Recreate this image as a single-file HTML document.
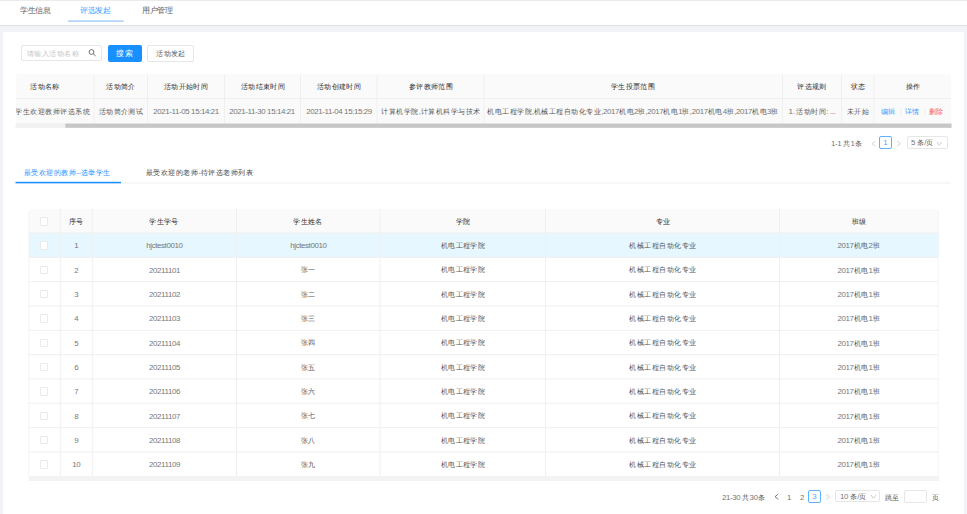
<!DOCTYPE html>
<html><head><meta charset="utf-8"><style>
html,body{margin:0;padding:0;}
body{width:967px;height:514px;overflow:hidden;position:relative;background:#f0f2f5;font-family:"Liberation Sans", sans-serif;font-size:8px;}
body>div{position:absolute;white-space:nowrap;}
.t{display:flex;align-items:center;}
.t span{display:inline-block;line-height:10px;}
b{font-weight:normal;font-size:8.45px;letter-spacing:-0.4px;opacity:.8;}
</style></head><body>
<div style="left:0px;top:0px;width:967px;height:25px;background:#fff;"></div>
<div style="left:0px;top:0px;width:967px;height:1.2px;background:#ebebeb;"></div>
<div style="left:0px;top:25px;width:967px;height:1px;background:#e0e0e0;"></div>
<div class="t" style="left:20px;top:3.30px;width:40px;height:15px;justify-content:flex-start;color:#5a5a5a;"><span style="transform:scale(0.95);transform-origin:left center">学生信息</span></div>
<div class="t" style="left:80px;top:3.30px;width:40px;height:15px;justify-content:flex-start;color:#3a9bff;"><span style="transform:scale(0.95);transform-origin:left center">评选发起</span></div>
<div class="t" style="left:141.5px;top:3.30px;width:40px;height:15px;justify-content:flex-start;color:#5a5a5a;"><span style="transform:scale(0.95);transform-origin:left center">用户管理</span></div>
<div style="left:3px;top:32px;width:961px;height:490px;background:#fff;"></div>
<div style="left:21.1px;top:44.5px;width:81.3px;height:16.8px;border:1px solid #e6e6e6;border-radius:2px;box-sizing:border-box;background:#fff;"></div>
<div class="t" style="left:27px;top:45.30px;width:60px;height:16.8px;justify-content:flex-start;color:#c4c4c4;"><span style="transform:scale(0.935);transform-origin:left center">请输入活动名称</span></div>
<svg style="position:absolute;left:86px;top:47px;" width="12" height="12" viewBox="0 0 12 12"><circle cx="5.5" cy="5" r="2.4" fill="none" stroke="#606060" stroke-width="0.9"/><line x1="7.3" y1="6.9" x2="9.6" y2="8.9" stroke="#606060" stroke-width="0.9"/></svg>
<div style="left:108px;top:44.5px;width:34px;height:17.1px;background:#1890ff;border-radius:2px;"></div>
<div class="t" style="left:107.5px;top:44.70px;width:34px;height:17.1px;justify-content:center;color:#fff;"><span style="transform:scale(1.0);transform-origin:center">搜<b>&nbsp;</b>索</span></div>
<div style="left:147.2px;top:44.5px;width:46.7px;height:17.1px;border:1px solid #e6e6e6;border-radius:2px;box-sizing:border-box;"></div>
<div class="t" style="left:147.2px;top:45.30px;width:46.7px;height:17.1px;justify-content:center;color:#555;"><span style="transform:scale(0.935);transform-origin:center">活动发起</span></div>
<div style="left:15.5px;top:74.3px;width:935.5px;height:48.7px;background:#fafafa;border-radius:3px 3px 0 0;"></div>
<div class="t" style="left:-4.5px;top:75.10px;width:98.5px;height:24.2px;justify-content:center;color:#2a2a2a;"><span style="transform:scale(0.935);transform-origin:center">活动名称</span></div>
<div class="t" style="left:94px;top:75.10px;width:53.5px;height:24.2px;justify-content:center;color:#2a2a2a;"><span style="transform:scale(0.935);transform-origin:center">活动简介</span></div>
<div class="t" style="left:147.5px;top:75.10px;width:77.0px;height:24.2px;justify-content:center;color:#2a2a2a;"><span style="transform:scale(0.935);transform-origin:center">活动开始时间</span></div>
<div class="t" style="left:224.5px;top:75.10px;width:76.0px;height:24.2px;justify-content:center;color:#2a2a2a;"><span style="transform:scale(0.935);transform-origin:center">活动结束时间</span></div>
<div class="t" style="left:300.5px;top:75.10px;width:76.5px;height:24.2px;justify-content:center;color:#2a2a2a;"><span style="transform:scale(0.935);transform-origin:center">活动创建时间</span></div>
<div class="t" style="left:377px;top:75.10px;width:107px;height:24.2px;justify-content:center;color:#2a2a2a;"><span style="transform:scale(0.935);transform-origin:center">参评教师范围</span></div>
<div class="t" style="left:484px;top:75.10px;width:298.5px;height:24.2px;justify-content:center;color:#2a2a2a;"><span style="transform:scale(0.935);transform-origin:center">学生投票范围</span></div>
<div class="t" style="left:782.5px;top:75.10px;width:59.0px;height:24.2px;justify-content:center;color:#2a2a2a;"><span style="transform:scale(0.935);transform-origin:center">评选规则</span></div>
<div class="t" style="left:841.5px;top:75.10px;width:32.5px;height:24.2px;justify-content:center;color:#2a2a2a;"><span style="transform:scale(0.935);transform-origin:center">状态</span></div>
<div class="t" style="left:874px;top:75.10px;width:77px;height:24.2px;justify-content:center;color:#2a2a2a;"><span style="transform:scale(0.935);transform-origin:center">操作</span></div>
<div class="t" style="left:15.5px;top:99.30px;width:74px;height:24.5px;justify-content:flex-end;color:#555;overflow:hidden;"><span style="transform:scale(0.935);transform-origin:right center">学生欢迎教师评选系统</span></div>
<div class="t" style="left:94px;top:99.30px;width:53.5px;height:24.5px;justify-content:center;color:#555;"><span style="transform:scale(0.935);transform-origin:center">活动简介测试</span></div>
<div class="t" style="left:147.5px;top:99.30px;width:77.0px;height:24.5px;justify-content:center;color:#555;"><span style="transform:scale(0.935);transform-origin:center"><b>2021-11-05 15:14:21</b></span></div>
<div class="t" style="left:224.5px;top:99.30px;width:76.0px;height:24.5px;justify-content:center;color:#555;"><span style="transform:scale(0.935);transform-origin:center"><b>2021-11-30 15:14:21</b></span></div>
<div class="t" style="left:300.5px;top:99.30px;width:76.5px;height:24.5px;justify-content:center;color:#555;"><span style="transform:scale(0.935);transform-origin:center"><b>2021-11-04 15:15:29</b></span></div>
<div class="t" style="left:377px;top:99.30px;width:107px;height:24.5px;justify-content:center;color:#555;"><span style="transform:scale(0.935);transform-origin:center">计算机学院<b>,</b>计算机科学与技术</span></div>
<div class="t" style="left:484px;top:99.30px;width:298.5px;height:24.5px;justify-content:center;color:#555;"><span style="transform:scale(0.935);transform-origin:center">机电工程学院<b>,</b>机械工程自动化专业<b>,2017</b>机电<b>2</b>班<b>,2017</b>机电<b>1</b>班<b>,2017</b>机电<b>4</b>班<b>,2017</b>机电<b>3</b>班</span></div>
<div class="t" style="left:782.5px;top:99.30px;width:59.0px;height:24.5px;justify-content:center;color:#555;"><span style="transform:scale(0.935);transform-origin:center"><b>1. </b>活动时间<b>: ...</b></span></div>
<div class="t" style="left:841.5px;top:99.30px;width:32.5px;height:24.5px;justify-content:center;color:#555;"><span style="transform:scale(0.935);transform-origin:center">未开始</span></div>
<div class="t" style="left:881px;top:99.30px;width:20px;height:24.5px;justify-content:flex-start;color:#3a9bff;"><span style="transform:scale(0.935);transform-origin:left center">编辑</span></div>
<div class="t" style="left:905px;top:99.30px;width:20px;height:24.5px;justify-content:flex-start;color:#3a9bff;"><span style="transform:scale(0.935);transform-origin:left center">详情</span></div>
<div class="t" style="left:929px;top:99.30px;width:20px;height:24.5px;justify-content:flex-start;color:#ff4d4f;"><span style="transform:scale(0.935);transform-origin:left center">删除</span></div>
<div class="t" style="left:831px;top:135.00px;width:40px;height:16px;justify-content:flex-start;color:#555;"><span style="transform:scale(0.935);transform-origin:left center"><b>1-1 </b>共<b>1</b>条</span></div>
<svg style="position:absolute;left:869.5px;top:138.5px;" width="7.2999999999999545" height="9.300000000000011" viewBox="0 0 7.2999999999999545 9.300000000000011"><polyline points="5.2999999999999545,2 2,4.650000000000006 5.2999999999999545,7.300000000000011" fill="none" stroke="#c8c8c8" stroke-width="0.8"/></svg>
<div style="left:879.3px;top:136.4px;width:12.6px;height:12.6px;border:1px solid #5fb0ff;border-radius:2px;box-sizing:border-box;"></div>
<div class="t" style="left:879.3px;top:136.60px;width:12.6px;height:12.6px;justify-content:center;color:#1890ff;"><span style="transform:scale(0.935);transform-origin:center"><b>1</b></span></div>
<svg style="position:absolute;left:895px;top:138.5px;" width="7.2999999999999545" height="9.300000000000011" viewBox="0 0 7.2999999999999545 9.300000000000011"><polyline points="2,2 5.2999999999999545,4.650000000000006 2,7.300000000000011" fill="none" stroke="#c8c8c8" stroke-width="0.8"/></svg>
<div style="left:906.5px;top:136.4px;width:41px;height:12.7px;border:1px solid #e6e6e6;border-radius:2px;box-sizing:border-box;"></div>
<div class="t" style="left:910.5px;top:136.60px;width:30px;height:12.7px;justify-content:flex-start;color:#555;"><span style="transform:scale(0.935);transform-origin:left center"><b>5 </b>条<b>/</b>页</span></div>
<svg style="position:absolute;left:935.4px;top:139.5px;" width="8.600000000000023" height="7.300000000000011" viewBox="0 0 8.600000000000023 7.300000000000011"><polyline points="2,2 4.300000000000011,5.300000000000011 6.600000000000023,2" fill="none" stroke="#c0c0c0" stroke-width="0.8"/></svg>
<div class="t" style="left:24px;top:164.60px;width:120px;height:16px;justify-content:flex-start;color:#1890ff;"><span style="transform:scale(0.935);transform-origin:left center">最受欢迎的教师<b>--</b>选举学生</span></div>
<div class="t" style="left:146.3px;top:164.60px;width:140px;height:16px;justify-content:flex-start;color:#444;"><span style="transform:scale(0.935);transform-origin:left center">最受欢迎的老师<b>-</b>待评选老师列表</span></div>
<div style="left:28.5px;top:208.7px;width:910.0px;height:24.3px;background:#fafafa;border-radius:3px 3px 0 0;"></div>
<div style="left:28.5px;top:233.0px;width:910.0px;height:24.33px;background:#e6f7ff;"></div>
<div class="t" style="left:60.3px;top:209.50px;width:32.0px;height:24.3px;justify-content:center;color:#2a2a2a;"><span style="transform:scale(0.935);transform-origin:center">序号</span></div>
<div class="t" style="left:92.3px;top:209.50px;width:144.2px;height:24.3px;justify-content:center;color:#2a2a2a;"><span style="transform:scale(0.935);transform-origin:center">学生学号</span></div>
<div class="t" style="left:236.5px;top:209.50px;width:143.5px;height:24.3px;justify-content:center;color:#2a2a2a;"><span style="transform:scale(0.935);transform-origin:center">学生姓名</span></div>
<div class="t" style="left:380px;top:209.50px;width:165.5px;height:24.3px;justify-content:center;color:#2a2a2a;"><span style="transform:scale(0.935);transform-origin:center">学院</span></div>
<div class="t" style="left:545.5px;top:209.50px;width:234.0px;height:24.3px;justify-content:center;color:#2a2a2a;"><span style="transform:scale(0.935);transform-origin:center">专业</span></div>
<div class="t" style="left:779.5px;top:209.50px;width:159.0px;height:24.3px;justify-content:center;color:#2a2a2a;"><span style="transform:scale(0.935);transform-origin:center">班级</span></div>
<div style="left:40.2px;top:217.4px;width:8.3px;height:8.3px;border:1px solid #ebebeb;border-radius:1px;box-sizing:border-box;background:#fff;"></div>
<div style="left:40.2px;top:241.4px;width:8.3px;height:8.3px;border:1px solid #ebebeb;border-radius:1px;box-sizing:border-box;background:#fff;"></div>
<div class="t" style="left:60.3px;top:233.80px;width:32.0px;height:24.33px;justify-content:center;color:#555;"><span style="transform:scale(0.935);transform-origin:center"><b>1</b></span></div>
<div class="t" style="left:92.3px;top:233.80px;width:144.2px;height:24.33px;justify-content:center;color:#555;"><span style="transform:scale(0.935);transform-origin:center"><b>hjctest0010</b></span></div>
<div class="t" style="left:236.5px;top:233.80px;width:143.5px;height:24.33px;justify-content:center;color:#555;"><span style="transform:scale(0.935);transform-origin:center"><b>hjctest0010</b></span></div>
<div class="t" style="left:380px;top:233.80px;width:165.5px;height:24.33px;justify-content:center;color:#555;"><span style="transform:scale(0.935);transform-origin:center">机电工程学院</span></div>
<div class="t" style="left:545.5px;top:233.80px;width:234.0px;height:24.33px;justify-content:center;color:#555;"><span style="transform:scale(0.935);transform-origin:center">机械工程自动化专业</span></div>
<div class="t" style="left:779.5px;top:233.80px;width:159.0px;height:24.33px;justify-content:center;color:#555;"><span style="transform:scale(0.935);transform-origin:center"><b>2017</b>机电<b>2</b>班</span></div>
<div style="left:40.2px;top:265.72999999999996px;width:8.3px;height:8.3px;border:1px solid #ebebeb;border-radius:1px;box-sizing:border-box;background:#fff;"></div>
<div class="t" style="left:60.3px;top:258.13px;width:32.0px;height:24.33px;justify-content:center;color:#555;"><span style="transform:scale(0.935);transform-origin:center"><b>2</b></span></div>
<div class="t" style="left:92.3px;top:258.13px;width:144.2px;height:24.33px;justify-content:center;color:#555;"><span style="transform:scale(0.935);transform-origin:center"><b>20211101</b></span></div>
<div class="t" style="left:236.5px;top:258.13px;width:143.5px;height:24.33px;justify-content:center;color:#555;"><span style="transform:scale(0.935);transform-origin:center">张一</span></div>
<div class="t" style="left:380px;top:258.13px;width:165.5px;height:24.33px;justify-content:center;color:#555;"><span style="transform:scale(0.935);transform-origin:center">机电工程学院</span></div>
<div class="t" style="left:545.5px;top:258.13px;width:234.0px;height:24.33px;justify-content:center;color:#555;"><span style="transform:scale(0.935);transform-origin:center">机械工程自动化专业</span></div>
<div class="t" style="left:779.5px;top:258.13px;width:159.0px;height:24.33px;justify-content:center;color:#555;"><span style="transform:scale(0.935);transform-origin:center"><b>2017</b>机电<b>1</b>班</span></div>
<div style="left:40.2px;top:290.05999999999995px;width:8.3px;height:8.3px;border:1px solid #ebebeb;border-radius:1px;box-sizing:border-box;background:#fff;"></div>
<div class="t" style="left:60.3px;top:282.46px;width:32.0px;height:24.33px;justify-content:center;color:#555;"><span style="transform:scale(0.935);transform-origin:center"><b>3</b></span></div>
<div class="t" style="left:92.3px;top:282.46px;width:144.2px;height:24.33px;justify-content:center;color:#555;"><span style="transform:scale(0.935);transform-origin:center"><b>20211102</b></span></div>
<div class="t" style="left:236.5px;top:282.46px;width:143.5px;height:24.33px;justify-content:center;color:#555;"><span style="transform:scale(0.935);transform-origin:center">张二</span></div>
<div class="t" style="left:380px;top:282.46px;width:165.5px;height:24.33px;justify-content:center;color:#555;"><span style="transform:scale(0.935);transform-origin:center">机电工程学院</span></div>
<div class="t" style="left:545.5px;top:282.46px;width:234.0px;height:24.33px;justify-content:center;color:#555;"><span style="transform:scale(0.935);transform-origin:center">机械工程自动化专业</span></div>
<div class="t" style="left:779.5px;top:282.46px;width:159.0px;height:24.33px;justify-content:center;color:#555;"><span style="transform:scale(0.935);transform-origin:center"><b>2017</b>机电<b>1</b>班</span></div>
<div style="left:40.2px;top:314.39px;width:8.3px;height:8.3px;border:1px solid #ebebeb;border-radius:1px;box-sizing:border-box;background:#fff;"></div>
<div class="t" style="left:60.3px;top:306.79px;width:32.0px;height:24.33px;justify-content:center;color:#555;"><span style="transform:scale(0.935);transform-origin:center"><b>4</b></span></div>
<div class="t" style="left:92.3px;top:306.79px;width:144.2px;height:24.33px;justify-content:center;color:#555;"><span style="transform:scale(0.935);transform-origin:center"><b>20211103</b></span></div>
<div class="t" style="left:236.5px;top:306.79px;width:143.5px;height:24.33px;justify-content:center;color:#555;"><span style="transform:scale(0.935);transform-origin:center">张三</span></div>
<div class="t" style="left:380px;top:306.79px;width:165.5px;height:24.33px;justify-content:center;color:#555;"><span style="transform:scale(0.935);transform-origin:center">机电工程学院</span></div>
<div class="t" style="left:545.5px;top:306.79px;width:234.0px;height:24.33px;justify-content:center;color:#555;"><span style="transform:scale(0.935);transform-origin:center">机械工程自动化专业</span></div>
<div class="t" style="left:779.5px;top:306.79px;width:159.0px;height:24.33px;justify-content:center;color:#555;"><span style="transform:scale(0.935);transform-origin:center"><b>2017</b>机电<b>1</b>班</span></div>
<div style="left:40.2px;top:338.71999999999997px;width:8.3px;height:8.3px;border:1px solid #ebebeb;border-radius:1px;box-sizing:border-box;background:#fff;"></div>
<div class="t" style="left:60.3px;top:331.12px;width:32.0px;height:24.33px;justify-content:center;color:#555;"><span style="transform:scale(0.935);transform-origin:center"><b>5</b></span></div>
<div class="t" style="left:92.3px;top:331.12px;width:144.2px;height:24.33px;justify-content:center;color:#555;"><span style="transform:scale(0.935);transform-origin:center"><b>20211104</b></span></div>
<div class="t" style="left:236.5px;top:331.12px;width:143.5px;height:24.33px;justify-content:center;color:#555;"><span style="transform:scale(0.935);transform-origin:center">张四</span></div>
<div class="t" style="left:380px;top:331.12px;width:165.5px;height:24.33px;justify-content:center;color:#555;"><span style="transform:scale(0.935);transform-origin:center">机电工程学院</span></div>
<div class="t" style="left:545.5px;top:331.12px;width:234.0px;height:24.33px;justify-content:center;color:#555;"><span style="transform:scale(0.935);transform-origin:center">机械工程自动化专业</span></div>
<div class="t" style="left:779.5px;top:331.12px;width:159.0px;height:24.33px;justify-content:center;color:#555;"><span style="transform:scale(0.935);transform-origin:center"><b>2017</b>机电<b>1</b>班</span></div>
<div style="left:40.2px;top:363.04999999999995px;width:8.3px;height:8.3px;border:1px solid #ebebeb;border-radius:1px;box-sizing:border-box;background:#fff;"></div>
<div class="t" style="left:60.3px;top:355.45px;width:32.0px;height:24.33px;justify-content:center;color:#555;"><span style="transform:scale(0.935);transform-origin:center"><b>6</b></span></div>
<div class="t" style="left:92.3px;top:355.45px;width:144.2px;height:24.33px;justify-content:center;color:#555;"><span style="transform:scale(0.935);transform-origin:center"><b>20211105</b></span></div>
<div class="t" style="left:236.5px;top:355.45px;width:143.5px;height:24.33px;justify-content:center;color:#555;"><span style="transform:scale(0.935);transform-origin:center">张五</span></div>
<div class="t" style="left:380px;top:355.45px;width:165.5px;height:24.33px;justify-content:center;color:#555;"><span style="transform:scale(0.935);transform-origin:center">机电工程学院</span></div>
<div class="t" style="left:545.5px;top:355.45px;width:234.0px;height:24.33px;justify-content:center;color:#555;"><span style="transform:scale(0.935);transform-origin:center">机械工程自动化专业</span></div>
<div class="t" style="left:779.5px;top:355.45px;width:159.0px;height:24.33px;justify-content:center;color:#555;"><span style="transform:scale(0.935);transform-origin:center"><b>2017</b>机电<b>1</b>班</span></div>
<div style="left:40.2px;top:387.38px;width:8.3px;height:8.3px;border:1px solid #ebebeb;border-radius:1px;box-sizing:border-box;background:#fff;"></div>
<div class="t" style="left:60.3px;top:379.78px;width:32.0px;height:24.33px;justify-content:center;color:#555;"><span style="transform:scale(0.935);transform-origin:center"><b>7</b></span></div>
<div class="t" style="left:92.3px;top:379.78px;width:144.2px;height:24.33px;justify-content:center;color:#555;"><span style="transform:scale(0.935);transform-origin:center"><b>20211106</b></span></div>
<div class="t" style="left:236.5px;top:379.78px;width:143.5px;height:24.33px;justify-content:center;color:#555;"><span style="transform:scale(0.935);transform-origin:center">张六</span></div>
<div class="t" style="left:380px;top:379.78px;width:165.5px;height:24.33px;justify-content:center;color:#555;"><span style="transform:scale(0.935);transform-origin:center">机电工程学院</span></div>
<div class="t" style="left:545.5px;top:379.78px;width:234.0px;height:24.33px;justify-content:center;color:#555;"><span style="transform:scale(0.935);transform-origin:center">机械工程自动化专业</span></div>
<div class="t" style="left:779.5px;top:379.78px;width:159.0px;height:24.33px;justify-content:center;color:#555;"><span style="transform:scale(0.935);transform-origin:center"><b>2017</b>机电<b>1</b>班</span></div>
<div style="left:40.2px;top:411.71px;width:8.3px;height:8.3px;border:1px solid #ebebeb;border-radius:1px;box-sizing:border-box;background:#fff;"></div>
<div class="t" style="left:60.3px;top:404.11px;width:32.0px;height:24.33px;justify-content:center;color:#555;"><span style="transform:scale(0.935);transform-origin:center"><b>8</b></span></div>
<div class="t" style="left:92.3px;top:404.11px;width:144.2px;height:24.33px;justify-content:center;color:#555;"><span style="transform:scale(0.935);transform-origin:center"><b>20211107</b></span></div>
<div class="t" style="left:236.5px;top:404.11px;width:143.5px;height:24.33px;justify-content:center;color:#555;"><span style="transform:scale(0.935);transform-origin:center">张七</span></div>
<div class="t" style="left:380px;top:404.11px;width:165.5px;height:24.33px;justify-content:center;color:#555;"><span style="transform:scale(0.935);transform-origin:center">机电工程学院</span></div>
<div class="t" style="left:545.5px;top:404.11px;width:234.0px;height:24.33px;justify-content:center;color:#555;"><span style="transform:scale(0.935);transform-origin:center">机械工程自动化专业</span></div>
<div class="t" style="left:779.5px;top:404.11px;width:159.0px;height:24.33px;justify-content:center;color:#555;"><span style="transform:scale(0.935);transform-origin:center"><b>2017</b>机电<b>1</b>班</span></div>
<div style="left:40.2px;top:436.03999999999996px;width:8.3px;height:8.3px;border:1px solid #ebebeb;border-radius:1px;box-sizing:border-box;background:#fff;"></div>
<div class="t" style="left:60.3px;top:428.44px;width:32.0px;height:24.33px;justify-content:center;color:#555;"><span style="transform:scale(0.935);transform-origin:center"><b>9</b></span></div>
<div class="t" style="left:92.3px;top:428.44px;width:144.2px;height:24.33px;justify-content:center;color:#555;"><span style="transform:scale(0.935);transform-origin:center"><b>20211108</b></span></div>
<div class="t" style="left:236.5px;top:428.44px;width:143.5px;height:24.33px;justify-content:center;color:#555;"><span style="transform:scale(0.935);transform-origin:center">张八</span></div>
<div class="t" style="left:380px;top:428.44px;width:165.5px;height:24.33px;justify-content:center;color:#555;"><span style="transform:scale(0.935);transform-origin:center">机电工程学院</span></div>
<div class="t" style="left:545.5px;top:428.44px;width:234.0px;height:24.33px;justify-content:center;color:#555;"><span style="transform:scale(0.935);transform-origin:center">机械工程自动化专业</span></div>
<div class="t" style="left:779.5px;top:428.44px;width:159.0px;height:24.33px;justify-content:center;color:#555;"><span style="transform:scale(0.935);transform-origin:center"><b>2017</b>机电<b>1</b>班</span></div>
<div style="left:40.2px;top:460.36999999999995px;width:8.3px;height:8.3px;border:1px solid #ebebeb;border-radius:1px;box-sizing:border-box;background:#fff;"></div>
<div class="t" style="left:60.3px;top:452.77px;width:32.0px;height:24.33px;justify-content:center;color:#555;"><span style="transform:scale(0.935);transform-origin:center"><b>10</b></span></div>
<div class="t" style="left:92.3px;top:452.77px;width:144.2px;height:24.33px;justify-content:center;color:#555;"><span style="transform:scale(0.935);transform-origin:center"><b>20211109</b></span></div>
<div class="t" style="left:236.5px;top:452.77px;width:143.5px;height:24.33px;justify-content:center;color:#555;"><span style="transform:scale(0.935);transform-origin:center">张九</span></div>
<div class="t" style="left:380px;top:452.77px;width:165.5px;height:24.33px;justify-content:center;color:#555;"><span style="transform:scale(0.935);transform-origin:center">机电工程学院</span></div>
<div class="t" style="left:545.5px;top:452.77px;width:234.0px;height:24.33px;justify-content:center;color:#555;"><span style="transform:scale(0.935);transform-origin:center">机械工程自动化专业</span></div>
<div class="t" style="left:779.5px;top:452.77px;width:159.0px;height:24.33px;justify-content:center;color:#555;"><span style="transform:scale(0.935);transform-origin:center"><b>2017</b>机电<b>1</b>班</span></div>
<div style="left:28.5px;top:476px;width:910px;height:4.7px;background:#f3f3f3;"></div>
<div class="t" style="left:721.6px;top:489.00px;width:50px;height:16px;justify-content:flex-start;color:#555;"><span style="transform:scale(0.935);transform-origin:left center"><b>21-30 </b>共<b>30</b>条</span></div>
<svg style="position:absolute;left:773px;top:491.8px;" width="7.2999999999999545" height="9.399999999999977" viewBox="0 0 7.2999999999999545 9.399999999999977"><polyline points="5.2999999999999545,2 2,4.699999999999989 5.2999999999999545,7.399999999999977" fill="none" stroke="#555" stroke-width="0.8"/></svg>
<div class="t" style="left:787px;top:489.00px;width:8px;height:16px;justify-content:flex-start;color:#555;"><span style="transform:scale(0.935);transform-origin:left center"><b>1</b></span></div>
<div class="t" style="left:800px;top:489.00px;width:8px;height:16px;justify-content:flex-start;color:#555;"><span style="transform:scale(0.935);transform-origin:left center"><b>2</b></span></div>
<div style="left:808px;top:490px;width:12.5px;height:12.5px;border:1px solid #5fb0ff;border-radius:2px;box-sizing:border-box;"></div>
<div class="t" style="left:808px;top:490.20px;width:12.5px;height:12.5px;justify-content:center;color:#1890ff;"><span style="transform:scale(0.935);transform-origin:center"><b>3</b></span></div>
<svg style="position:absolute;left:824.3px;top:491.8px;" width="7.300000000000068" height="9.399999999999977" viewBox="0 0 7.300000000000068 9.399999999999977"><polyline points="2,2 5.300000000000068,4.699999999999989 2,7.399999999999977" fill="none" stroke="#c8c8c8" stroke-width="0.8"/></svg>
<div style="left:835.3px;top:490.4px;width:45px;height:12.1px;border:1px solid #e6e6e6;border-radius:2px;box-sizing:border-box;"></div>
<div class="t" style="left:839.5px;top:490.60px;width:40px;height:12.1px;justify-content:flex-start;color:#555;"><span style="transform:scale(0.935);transform-origin:left center"><b>10 </b>条<b>/</b>页</span></div>
<svg style="position:absolute;left:869.2px;top:493px;" width="8.799999999999955" height="7.300000000000011" viewBox="0 0 8.799999999999955 7.300000000000011"><polyline points="2,2 4.399999999999977,5.300000000000011 6.7999999999999545,2" fill="none" stroke="#c0c0c0" stroke-width="0.8"/></svg>
<div class="t" style="left:884.8px;top:489.80px;width:20px;height:16px;justify-content:flex-start;color:#555;"><span style="transform:scale(0.935);transform-origin:left center">跳至</span></div>
<div style="left:904.2px;top:490.4px;width:23.1px;height:12.4px;border:1px solid #e6e6e6;border-radius:2px;box-sizing:border-box;"></div>
<div class="t" style="left:931.7px;top:489.80px;width:10px;height:16px;justify-content:flex-start;color:#555;"><span style="transform:scale(0.935);transform-origin:left center">页</span></div>
<svg style="position:absolute;left:0;top:0" width="967" height="514"><rect x="68.00" y="20.30" width="55.70" height="1.60" fill="#abd3fc"/><rect x="15.50" y="98.00" width="935.50" height="1.00" fill="#efefef"/><rect x="93.50" y="74.30" width="1.00" height="48.70" fill="#efefef"/><rect x="147.00" y="74.30" width="1.00" height="48.70" fill="#efefef"/><rect x="224.00" y="74.30" width="1.00" height="48.70" fill="#efefef"/><rect x="300.00" y="74.30" width="1.00" height="48.70" fill="#efefef"/><rect x="376.50" y="74.30" width="1.00" height="48.70" fill="#efefef"/><rect x="483.50" y="74.30" width="1.00" height="48.70" fill="#efefef"/><rect x="782.00" y="74.30" width="1.00" height="48.70" fill="#efefef"/><rect x="841.00" y="74.30" width="1.00" height="48.70" fill="#efefef"/><rect x="873.50" y="74.30" width="1.00" height="48.70" fill="#efefef"/><rect x="900.30" y="108.50" width="0.80" height="6.00" fill="#e8e8e8"/><rect x="924.30" y="108.50" width="0.80" height="6.00" fill="#e8e8e8"/><rect x="15.50" y="123.20" width="936.00" height="4.60" fill="#f1f1f1"/><rect x="65.30" y="123.60" width="886.20" height="4.20" fill="#c6c6c6"/><rect x="15.50" y="182.50" width="935.50" height="1.00" fill="#f0f0f0"/><rect x="15.50" y="181.80" width="105.50" height="1.50" fill="#1890ff"/><rect x="28.50" y="232.50" width="910.00" height="1.00" fill="#efefef"/><rect x="28.50" y="256.83" width="910.00" height="1.00" fill="#efefef"/><rect x="28.50" y="281.16" width="910.00" height="1.00" fill="#efefef"/><rect x="28.50" y="305.49" width="910.00" height="1.00" fill="#efefef"/><rect x="28.50" y="329.82" width="910.00" height="1.00" fill="#efefef"/><rect x="28.50" y="354.15" width="910.00" height="1.00" fill="#efefef"/><rect x="28.50" y="378.48" width="910.00" height="1.00" fill="#efefef"/><rect x="28.50" y="402.81" width="910.00" height="1.00" fill="#efefef"/><rect x="28.50" y="427.14" width="910.00" height="1.00" fill="#efefef"/><rect x="28.50" y="451.47" width="910.00" height="1.00" fill="#efefef"/><rect x="59.80" y="208.70" width="1.00" height="267.60" fill="#efefef"/><rect x="91.80" y="208.70" width="1.00" height="267.60" fill="#efefef"/><rect x="236.00" y="208.70" width="1.00" height="267.60" fill="#efefef"/><rect x="379.50" y="208.70" width="1.00" height="267.60" fill="#efefef"/><rect x="545.00" y="208.70" width="1.00" height="267.60" fill="#efefef"/><rect x="779.00" y="208.70" width="1.00" height="267.60" fill="#efefef"/><rect x="28.50" y="211.70" width="0.80" height="264.60" fill="#f2f2f2"/><rect x="937.70" y="211.70" width="0.80" height="264.60" fill="#f2f2f2"/></svg>
</body></html>
